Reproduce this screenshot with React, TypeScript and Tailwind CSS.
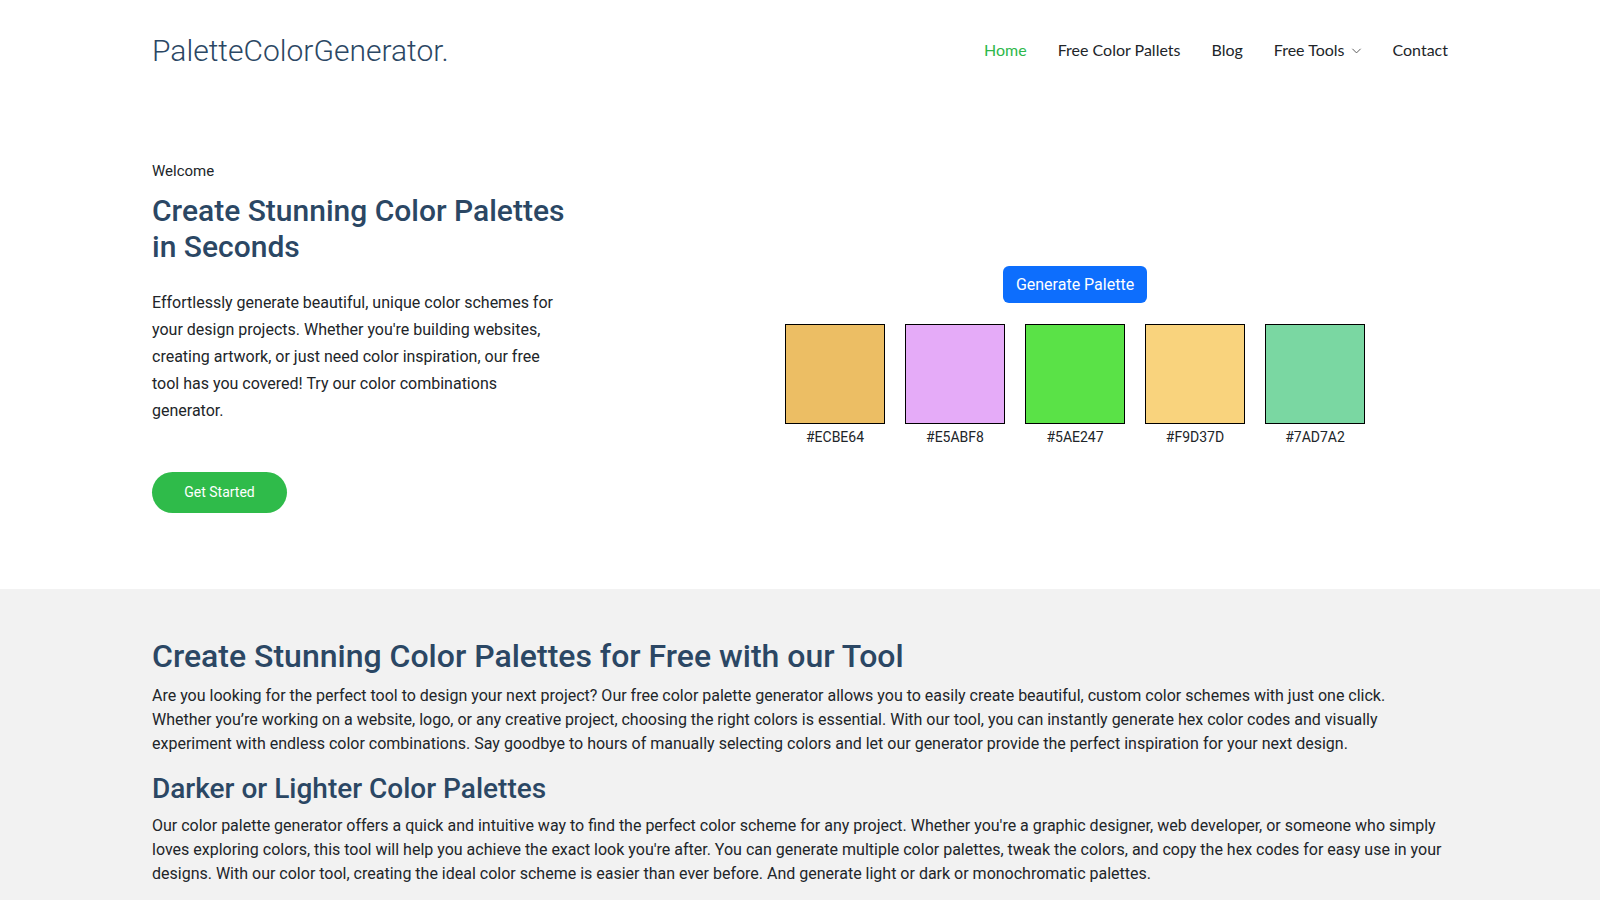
import React from 'react';

const swatches = ['#ECBE64', '#E5ABF8', '#5AE247', '#F9D37D', '#7AD7A2'];

const navItems = ['Home', 'Free Color Pallets', 'Blog', 'Free Tools', 'Contact'];

const App: React.FC = () => {
  return (
    <div className="min-h-screen bg-white text-[#212529] font-['Roboto',sans-serif]">
      {/* header */}
      <header className="h-[100px]">
        <div className="mx-auto w-[1296px] h-full flex items-center justify-between">
          <a className="text-[30px] font-light text-[#2b4764]">PaletteColorGenerator.</a>
          <nav className="flex items-center gap-[31px] font-['Lato',sans-serif] text-[16px] text-[#212529]">
            {navItems.map((item) => (
              <a key={item} className={`flex items-center ${item === 'Home' ? 'text-[#2db84b]' : ''}`}>
                {item}
                {item === 'Free Tools' && (
                  <svg className="ml-[6px] w-[11px] h-[11px]" viewBox="0 0 16 16" fill="none" stroke="#555" strokeWidth="1.4">
                    <path d="M2 5.5l6 6 6-6" />
                  </svg>
                )}
              </a>
            ))}
          </nav>
        </div>
      </header>

      {/* hero */}
      <section className="pt-[60px] pb-[76px]">
        <div className="mx-auto w-[1296px] flex">
          <div className="w-[550px] shrink-0">
            <div className="w-[416px]">
              <p className="text-[15px] leading-[22px]">Welcome</p>
              <h1 className="mt-[11px] text-[30px] leading-[36px] font-medium text-[#2b4764]">
                Create Stunning Color Palettes in Seconds
              </h1>
              <p className="mt-[24px] text-[16px] leading-[27px] pr-[8px]">
                Effortlessly generate beautiful, unique color schemes for your design projects. Whether you're
                building websites, creating artwork, or just need color inspiration, our free tool has you covered!
                Try our color combinations generator.
              </p>
              <button className="mt-[48px] w-[135px] h-[41px] rounded-full bg-[#2fbb4a] text-white text-[14px]">
                Get Started
              </button>
            </div>
          </div>
          <div className="flex-1 flex flex-col items-center pt-[106px]">
            <button className="h-[37px] px-[13px] rounded-[6px] bg-[#0d6efd] text-white text-[16px]">
              Generate Palette
            </button>
            <div className="mt-[21px] flex gap-[20px]">
              {swatches.map((c) => (
                <div key={c} className="flex flex-col items-center">
                  <div className="w-[100px] h-[100px] border border-black" style={{ backgroundColor: c }} />
                  <span className="mt-[3px] text-[14px] leading-[20px]">{c}</span>
                </div>
              ))}
            </div>
          </div>
        </div>
      </section>

      {/* info */}
      <section className="bg-[#f2f2f2] pt-[48px] pb-[40px]">
        <div className="mx-auto w-[1296px]">
          <h2 className="text-[32px] leading-[38px] font-medium text-[#2b4764]">
            Create Stunning Color Palettes for Free with our Tool
          </h2>
          <p className="mt-[9px] text-[16px] leading-[24px]">
            Are you looking for the perfect tool to design your next project? Our free color palette generator allows
            you to easily create beautiful, custom color schemes with just one click. Whether you’re working on a
            website, logo, or any creative project, choosing the right colors is essential. With our tool, you can
            instantly generate hex color codes and visually experiment with endless color combinations. Say goodbye to
            hours of manually selecting colors and let our generator provide the perfect inspiration for your next
            design.
          </p>
          <h3 className="mt-[16px] text-[28px] leading-[34px] font-medium text-[#2b4764]">
            Darker or Lighter Color Palettes
          </h3>
          <p className="mt-[8px] text-[16px] leading-[24px]">
            Our color palette generator offers a quick and intuitive way to find the perfect color scheme for any
            project. Whether you're a graphic designer, web developer, or someone who simply loves exploring colors,
            this tool will help you achieve the exact look you're after. You can generate multiple color palettes,
            tweak the colors, and copy the hex codes for easy use in your designs. With our color tool, creating the
            ideal color scheme is easier than ever before. And generate light or dark or monochromatic palettes.
          </p>
        </div>
      </section>
    </div>
  );
};

export default App;
